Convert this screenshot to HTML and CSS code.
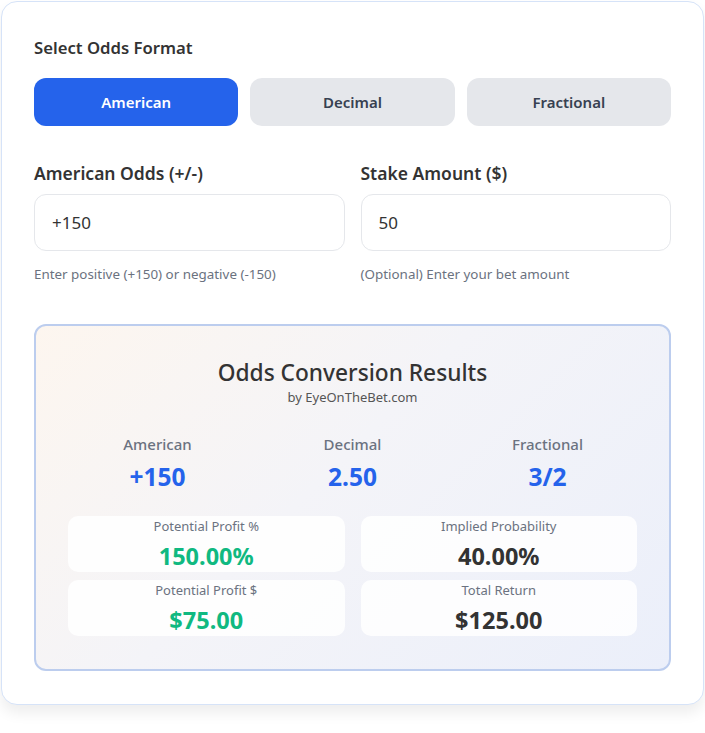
FILE: index.html
```html
<!DOCTYPE html>
<html lang="en">
<head>
<meta charset="utf-8">
<title>Odds Converter</title>
<link rel="stylesheet" href="styles.css">
</head>
<body>
<div class="card">
  <div class="section-label">Select Odds Format</div>
  <div class="formats">
    <button class="fmt active">American</button>
    <button class="fmt">Decimal</button>
    <button class="fmt">Fractional</button>
  </div>

  <div class="fields">
    <div class="field">
      <label class="field-label">American Odds (+/-)</label>
      <div class="input">+150</div>
      <div class="help">Enter positive (+150) or negative (-150)</div>
    </div>
    <div class="field">
      <label class="field-label">Stake Amount ($)</label>
      <div class="input">50</div>
      <div class="help">(Optional) Enter your bet amount</div>
    </div>
  </div>

  <div class="results">
    <div class="results-title">Odds Conversion Results</div>
    <div class="results-sub">by EyeOnTheBet.com</div>
    <div class="odds-grid">
      <div class="odd"><div class="odd-label">American</div><div class="odd-value">+150</div></div>
      <div class="odd"><div class="odd-label">Decimal</div><div class="odd-value">2.50</div></div>
      <div class="odd"><div class="odd-label">Fractional</div><div class="odd-value">3/2</div></div>
    </div>
    <div class="stats">
      <div class="stat"><div class="stat-label">Potential Profit %</div><div class="stat-value green">150.00%</div></div>
      <div class="stat"><div class="stat-label">Implied Probability</div><div class="stat-value">40.00%</div></div>
      <div class="stat"><div class="stat-label">Potential Profit $</div><div class="stat-value green">$75.00</div></div>
      <div class="stat"><div class="stat-label">Total Return</div><div class="stat-value">$125.00</div></div>
    </div>
  </div>
</div>
</body>
</html>
```

FILE: styles.css
```css
* { box-sizing: border-box; }
html, body { margin: 0; background: #ffffff; }
body {
  padding: 1px 1px 30px 1px;
  font-family: "Noto Sans", "Open Sans", sans-serif;
  color: #333333;
}
.card {
  border: 1px solid #d6e3f8;
  border-radius: 16px;
  background: #ffffff;
  padding: 34px 32px 33px 32px;
  box-shadow: 0 8px 14px rgba(0, 0, 0, 0.07);
}
.section-label {
  font-size: 16.7px;
  line-height: 24px;
  font-weight: 600;
  color: #333333;
}
.formats {
  margin-top: 18px;
  display: grid;
  grid-template-columns: 1fr 1fr 1fr;
  gap: 12px;
}
.fmt {
  height: 48px;
  border: none;
  border-radius: 12px;
  background: #e5e7eb;
  color: #374151;
  font-family: inherit;
  font-size: 15px;
  font-weight: 600;
  padding: 0;
}
.fmt.active {
  background: #2563eb;
  color: #ffffff;
}
.fields {
  margin-top: 35px;
  display: grid;
  grid-template-columns: 1fr 1fr;
  gap: 16px;
}
.field-label {
  display: block;
  font-size: 17.5px;
  line-height: 24px;
  font-weight: 600;
  color: #333333;
}
.input {
  margin-top: 9px;
  height: 57px;
  border: 1px solid #e5e7eb;
  border-radius: 12px;
  padding: 0 17px;
  display: flex;
  align-items: center;
  font-size: 17px;
  color: #333333;
  background: #ffffff;
}
.help {
  margin-top: 14px;
  font-size: 13.4px;
  line-height: 18px;
  color: #6b7280;
}
.results {
  margin-top: 41px;
  border: 2px solid #bccdee;
  border-radius: 12px;
  background: linear-gradient(135deg, #fdf6ef 0%, #f4f4f8 45%, #ebeffa 100%);
  padding: 32px 32px 33px 32px;
  text-align: center;
}
.results-title {
  font-size: 22.7px;
  line-height: 30px;
  font-weight: 500;
  color: #333333;
}
.results-sub {
  font-size: 13px;
  line-height: 18px;
  color: #555555;
}
.odds-grid {
  margin-top: 27px;
  display: grid;
  grid-template-columns: 1fr 1fr 1fr;
  gap: 16px;
}
.odd-label {
  font-size: 15px;
  line-height: 22px;
  font-weight: 500;
  color: #6b7280;
}
.odd-value {
  margin-top: 6px;
  font-size: 24.5px;
  line-height: 32px;
  font-weight: 700;
  color: #2563eb;
}
.stats {
  margin-top: 23px;
  display: grid;
  grid-template-columns: 1fr 1fr;
  column-gap: 16px;
  row-gap: 8px;
}
.stat {
  background: rgba(255, 255, 255, 0.85);
  border-radius: 10px;
  padding: 1px 8px 1px 8px;
  height: 56px;
}
.stat-label {
  font-size: 13px;
  line-height: 18px;
  color: #6b7280;
}
.stat-value {
  margin-top: 6px;
  font-size: 23.5px;
  line-height: 30px;
  font-weight: 700;
  color: #333333;
}
.stat-value.green { color: #10b981; }
```
